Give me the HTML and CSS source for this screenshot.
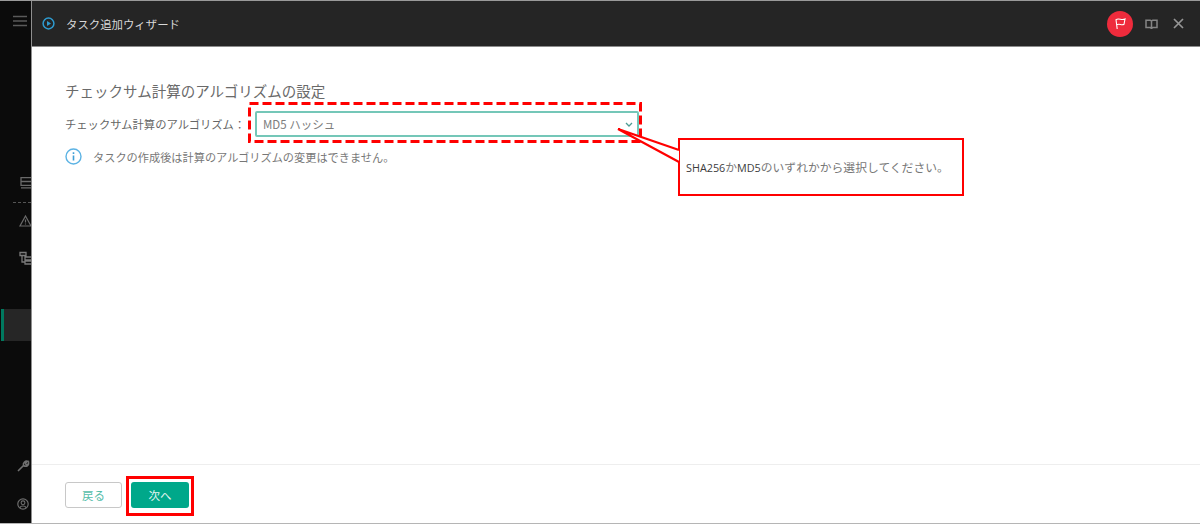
FILE: index.html
```html
<!DOCTYPE html>
<html lang="ja">
<head>
<meta charset="utf-8">
<title>タスク追加ウィザード</title>
<link rel="stylesheet" href="styles.css">
</head>
<body>
<div class="app">
  <aside class="rail">
    <svg class="rail-menu" width="14" height="12" viewBox="0 0 14 12"><path d="M0 1.500h14M0 6h14M0 10.500h14" stroke="#5a5a5a" stroke-width="1.400" fill="none"/></svg>
    <svg class="rail-a" width="12" height="12" viewBox="0 0 12 12"><path d="M1 .7h11v7.600H1zM1 4.500h11M1 10.800h11" stroke="#6a6a6a" stroke-width="1.300" fill="none"/></svg>
    <div class="rail-dots"></div>
    <svg class="rail-b" width="12" height="12" viewBox="0 0 12 12"><path d="M5.500 1 11 11H0zM5.500 4.500v3M5.500 8.500v1" stroke="#6a6a6a" stroke-width="1.200" fill="none"/></svg>
    <svg class="rail-c" width="12" height="13" viewBox="0 0 12 13"><path d="M0 .5h6v3H0zM2 3.500v6.500h3M5 5h8v3H5zM5 9h8v3H5z" stroke="#7a7a7a" stroke-width="1.300" fill="none"/></svg>
    <div class="rail-active"></div>
    <div class="rail-spacer"></div>
    <svg class="rail-d" width="12" height="12" viewBox="0 0 12 12"><path d="M1 11 6.500 5.500M6.500 5.500C5.800 3 8 .8 10.500 1.200L8.500 3.200l.6 1.400 1.500.4 1-2C12 6 9 7 6.500 5.500" stroke="#707070" stroke-width="1.600" fill="none"/></svg>
    <svg class="rail-e" width="12" height="12" viewBox="0 0 12 12"><circle cx="6" cy="6" r="5.200" stroke="#6e6e6e" stroke-width="1.200" fill="none"/><circle cx="6" cy="4.800" r="1.900" stroke="#6e6e6e" stroke-width="1.100" fill="none"/><path d="M2.800 9.800c1-2.400 5.400-2.400 6.400 0" stroke="#6e6e6e" stroke-width="1.100" fill="none"/></svg>
  </aside>
  <div class="wizard">
    <header class="topbar">
      <svg class="play" width="13" height="13" viewBox="0 0 13 13"><circle cx="6.500" cy="6.500" r="5.400" stroke="#2e9bd0" stroke-width="1.500" fill="none"/><path d="M5 3.900 9 6.500 5 9.100z" fill="#2e9bd0"/></svg>
      <span class="topbar-title">タスク追加ウィザード</span>
      <span class="flag"><svg width="13" height="13" viewBox="0 0 13 13"><path d="M3.200 12 2 2.600C5 .8 7.500 3.800 11 2L10 7.300C7.500 8.800 5.500 6.200 2.700 7.800" stroke="#fff" stroke-width="1.100" fill="none"/></svg></span>
      <svg class="book" width="13" height="10" viewBox="0 0 13 10"><path d="M1 1.200h4.200l1.300.8 1.300-.8H12v7.400H7.800l-1.300.8-1.300-.8H1zM6.500 2v7" stroke="#858585" stroke-width="1.500" fill="none"/></svg>
      <svg class="close" width="11" height="11" viewBox="0 0 11 11"><path d="M1 1l9 9M10 1l-9 9" stroke="#959595" stroke-width="1.700" fill="none"/></svg>
    </header>
    <main class="body">
      <h1 class="heading">チェックサム計算のアルゴリズムの設定</h1>
      <div class="field">
        <label class="field-label">チェックサム計算のアルゴリズム：</label>
        <div class="select">
          <span class="select-value">MD5 ハッシュ</span>
          <svg width="8" height="5" viewBox="0 0 8 5"><path d="M1 1l3 3 3-3" stroke="#4d9c94" stroke-width="1.300" fill="none"/></svg>
        </div>
      </div>
      <p class="note">
        <svg width="17" height="17" viewBox="0 0 17 17"><circle cx="8.500" cy="8.500" r="7.500" stroke="#5cb3e4" stroke-width="1.400" fill="none"/><path d="M8.500 7.400v5M8.500 4.300v1.600" stroke="#3f9fd6" stroke-width="1.600" fill="none"/></svg>
        <span>タスクの作成後は計算のアルゴリズムの変更はできません。</span>
      </p>
    </main>
    <footer class="footer">
      <button class="btn btn-back">戻る</button>
      <button class="btn btn-next">次へ</button>
    </footer>
  </div>
</div>
<svg class="mark-select" width="394" height="41" viewBox="0 0 394 41"><rect x="1.500" y="1.500" width="391" height="38" fill="none" stroke="#f00" stroke-width="3" stroke-dasharray="9 4"/></svg>
<div class="mark-next"></div>
<div class="callout"><span class="latin">SHA256</span>か<span class="latin">MD5</span>のいずれかから選択してください。</div>
<svg class="callout-tail" width="64" height="36" viewBox="0 0 64 36"><path d="M1 1 62 22V34Z" fill="#fff"/><path d="M62 22 1 1 62 34" stroke="#f00" stroke-width="2.200" fill="none"/></svg>
</body>
</html>
```
FILE: styles.css
```css
* { box-sizing: border-box; }
html, body { margin: 0; height: 100%; overflow: hidden; background: #fff; }
body { font-family: "Noto Sans CJK JP", "Noto Sans", sans-serif; color: #666; }
.app { display: flex; width: 1200px; height: 524px; border-top: 1px solid #9a9a9a; border-bottom: 1px solid #b5b5b5; }
.rail { width: 32px; flex: none; background: #0b0b0b; display: flex; flex-direction: column; overflow: hidden; border-right: 1px solid #8f8f8f; }
.rail svg { flex: none; overflow: visible; }
.rail-menu { margin: 14px 0 0 13px; }
.rail-a { margin: 150px 0 0 20px; }
.rail-dots { margin: 13px 0 0 13px; height: 1px; flex: none; border-top: 1px dashed #555; }
.rail-b { margin: 12px 0 0 20px; }
.rail-c { margin: 25px 0 0 20px; }
.rail-active { margin: 44px 0 0 1px; height: 32px; flex: none; background: #262626; border-left: 3px solid #00795f; }
.rail-spacer { flex: 1; }
.rail-d { margin-left: 17px; }
.rail-e { margin: 26px 0 13px 17px; }
.wizard { flex: 1; display: flex; flex-direction: column; min-width: 0; }
.topbar { height: 46px; flex: none; background: #252525; border-bottom: 1px solid #8c8c8c; display: flex; align-items: center; padding: 0 16px 0 10px; color: #d8d8d8; }
.topbar-title { font-size: 11.400px; margin-left: 11px; flex: 1; }
.flag { width: 26px; height: 26px; border-radius: 50%; background: #ee2b3c; display: flex; align-items: center; justify-content: center; }
.book { margin-left: 12px; }
.close { margin-left: 15px; }
.body { flex: 1; padding: 34px 0 0 33px; }
.heading { margin: 0; font-size: 14.500px; font-weight: 400; line-height: 20px; color: #6a6a6a; }
.field { display: flex; align-items: center; margin-top: 10px; }
.field-label { font-size: 11.300px; width: 190px; flex: none; color: #666; }
.select { width: 384px; height: 26px; border: 2px solid #74c7b8; border-radius: 2px; display: flex; align-items: center; justify-content: space-between; padding: 0 4px 0 6px; }
.select-value { font-size: 11.500px; color: #7d7d7d; }
.note { margin: 11px 0 0; display: flex; align-items: center; font-size: 11.200px; color: #777; }
.note svg { margin-right: 11px; }
.footer { height: 59px; flex: none; border-top: 1px solid #eee; display: flex; align-items: flex-start; gap: 9px; padding: 17px 0 0 33px; }
.btn { height: 26px; border-radius: 3px; font: 11.500px "Noto Sans CJK JP", sans-serif; padding: 0; }
.btn-back { width: 57px; background: #fff; border: 1px solid #c8c8c8; color: #55bda9; }
.btn-next { width: 58px; background: #00a88a; border: 0; color: #e4f5f1; }
.mark-select { position: absolute; left: 248px; top: 102px; }
.mark-next { position: absolute; left: 126px; top: 476px; width: 68px; height: 40px; border: 3px solid #f00; }
.callout { position: absolute; left: 678px; top: 138px; width: 286px; height: 58px; border: 2.500px solid #f00; background: #fff; padding: 0 0 0 6px; font-size: 11.800px; line-height: 53px; color: #777; }
.latin { font-family: "Open Sans", sans-serif; font-size: 10.800px; color: #3c3c3c; }
.callout-tail { position: absolute; left: 617px; top: 128px; }
```
